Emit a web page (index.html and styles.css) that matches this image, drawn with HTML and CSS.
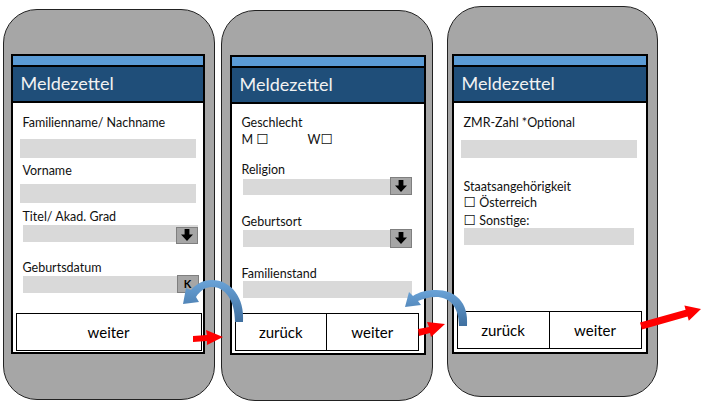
FILE: index.html
```html
<!DOCTYPE html>
<html lang="de">
<head>
<meta charset="utf-8">
<title>Meldezettel</title>
<link rel="stylesheet" href="styles.css">
</head>
<body>
<div class="stage">
  <div class="phone phone-1">
    <div class="screen">
      <div class="topbar"></div>
      <div class="title">Meldezettel</div>
      <div class="body body-1">
        <div class="label l1">Familienname/ Nachname</div>
        <div class="field f1"></div>
        <div class="label l2">Vorname</div>
        <div class="field f2"></div>
        <div class="label l3">Titel/ Akad. Grad</div>
        <div class="select s3">
          <div class="field"></div>
          <div class="drop"><svg width="12" height="12" viewBox="0 0 10 10"><polygon points="3,0 7,0 7,4.5 10,4.5 5,10 0,4.5 3,4.5" fill="#000"/></svg></div>
        </div>
        <div class="label l4">Geburtsdatum</div>
        <div class="select s4">
          <div class="field"></div>
          <div class="drop k">K</div>
        </div>
        <div class="btnrow single b1"><div class="btn">weiter</div></div>
      </div>
    </div>
  </div>

  <div class="phone phone-2">
    <div class="screen">
      <div class="topbar"></div>
      <div class="title">Meldezettel</div>
      <div class="body body-2">
        <div class="label g1">Geschlecht</div>
        <div class="label g2"><span class="opt">M <span class="box">☐</span></span><span class="opt">W<span class="box">☐</span></span></div>
        <div class="label g3">Religion</div>
        <div class="select s5">
          <div class="field"></div>
          <div class="drop"><svg width="12" height="12" viewBox="0 0 10 10"><polygon points="3,0 7,0 7,4.5 10,4.5 5,10 0,4.5 3,4.5" fill="#000"/></svg></div>
        </div>
        <div class="label g4">Geburtsort</div>
        <div class="select s6">
          <div class="field"></div>
          <div class="drop"><svg width="12" height="12" viewBox="0 0 10 10"><polygon points="3,0 7,0 7,4.5 10,4.5 5,10 0,4.5 3,4.5" fill="#000"/></svg></div>
        </div>
        <div class="label g5">Familienstand</div>
        <div class="field f7"></div>
        <div class="btnrow b2"><div class="btn">zurück</div><div class="btn">weiter</div></div>
      </div>
    </div>
  </div>

  <div class="phone phone-3">
    <div class="screen">
      <div class="topbar"></div>
      <div class="title">Meldezettel</div>
      <div class="body body-3">
        <div class="label z1">ZMR-Zahl *Optional</div>
        <div class="field f8"></div>
        <div class="label z2">Staatsangehörigkeit</div>
        <div class="label z3"><span class="box">☐</span> Österreich</div>
        <div class="label z4"><span class="box">☐</span> Sonstige:</div>
        <div class="field f9"></div>
        <div class="btnrow b3"><div class="btn">zurück</div><div class="btn">weiter</div></div>
      </div>
    </div>
  </div>

  <svg class="arrows" width="708" height="407" viewBox="0 0 708 407">
    <defs>
      <linearGradient id="blue" x1="0" y1="0" x2="0" y2="1">
        <stop offset="0" stop-color="#6aa3d8"/>
        <stop offset="1" stop-color="#3f6f9f"/>
      </linearGradient>
    </defs>
    <path fill="url(#blue)" d="M 243 322 C 245 298 231 280 212 280 C 203 280 196 284 191 290 L 186 288 L 183 304 L 199 302 L 196 297 C 200 291 205 287 212 287 C 225 287 235 300 235 322 Z"/>
    <path fill="url(#blue)" d="M 467 326 C 469 302 455 290 436 290 C 427 290 419 292 413 296 L 409 292 L 405 307 L 421 305 L 418 301 C 423 299 429 297 436 297 C 449 297 459 306 459 326 Z"/>
    <polygon fill="#ff0000" points="193,336 207,335 206,330 223,337 207,345 207,341 193,342"/>
    <polygon fill="#ff0000" points="418,329 429,327 427,322 445,324 431,337 430,333 419,336"/>
    <polygon fill="#ff0000" points="640,322.6 685.6,309.7 684.4,305.4 701,309 688.8,320.8 687.6,316.5 642,329.4"/>
  </svg>
</div>
</body>
</html>
```

FILE: styles.css
```css
* { box-sizing: border-box; }
html, body { margin: 0; padding: 0; background: #fff; }
body {
  width: 708px;
  height: 407px;
  overflow: hidden;
  font-family: Lato, "DejaVu Sans", sans-serif;
  color: #111;
}
.stage {
  position: relative;
  display: flex;
  align-items: flex-start;
  padding-left: 3px;
  width: 708px;
  height: 407px;
}
.phone {
  width: 212px;
  height: 391px;
  background: #a6a6a6;
  border: 1.5px solid #222;
  border-radius: 34px;
  display: flex;
  flex-direction: column;
}
.phone-1 { margin-top: 9px; padding: 43.5px 9.5px 0 6.5px; }
.phone-2 { margin-top: 10px; margin-left: 6px; padding: 43.5px 6.5px 0 7.5px; }
.phone-3 { margin-top: 6px; margin-left: 14px; width: 211px; padding: 46.5px 9.5px 0 3.5px; }

.screen {
  height: 300px;
  background: #fff;
  border: 2px solid #000;
  display: flex;
  flex-direction: column;
}
.topbar {
  height: 11px;
  background: #5b9bd5;
  border-bottom: 2px solid #000;
}
.title {
  height: 36px;
  background: #1f4e79;
  border-bottom: 2px solid #000;
  color: #f2f2f2;
  font-size: 18px;
  display: flex;
  align-items: center;
  padding-left: 8px;
  padding-bottom: 1px;
}
.body {
  flex: 1;
  display: flex;
  flex-direction: column;
}
.label {
  font-size: 12.5px;
  line-height: 14px;
  height: 14px;
  padding-left: 10px;
  white-space: nowrap;
}
.field {
  background: #d9d9d9;
  height: 19px;
}
.select {
  display: grid;
}
.select > * { grid-area: 1 / 1; }
.select .field { height: 17px; }
.drop {
  justify-self: end;
  width: 22px;
  height: 17px;
  background: #a6a6a6;
  border: 1px solid #7f7f7f;
  display: flex;
  align-items: center;
  justify-content: center;
}
.drop.k {
  font-weight: bold;
  font-size: 11px;
  color: #000;
  height: 18px;
}
.box {
  font-family: "DejaVu Sans", sans-serif;
  font-size: 14px;
  line-height: 14px;
}
.btnrow {
  display: flex;
  height: 38px;
  border: 1.5px solid #000;
  background: #fff;
}
.btn {
  flex: 1;
  display: flex;
  align-items: center;
  justify-content: center;
  font-size: 15px;
  color: #000;
}
.btnrow .btn + .btn { border-left: 1.5px solid #000; }

/* phone 1 */
.l1 { margin-top: 13px; }
.f1 { margin: 9px 7px 0 7px; }
.l2 { margin-top: 6px; }
.f2 { margin: 6px 7px 0 7px; }
.l3 { margin-top: 7px; }
.s3 { margin: 1px 5px 0 10px; }
.s3 .drop { margin-top: 2px; }
.l4 { margin-top: 17px; }
.s4 { margin: 0 4px 0 10px; }
.s4 .field { margin-top: 1px; }
.b1 { margin: 20px 1px 0 3px; }

/* phone 2 */
.g1 { margin-top: 12px; }
.g2 { margin-top: 2px; display: flex; }
.g2 .opt { width: 66px; }
.g3 { margin-top: 17px; }
.s5 { margin: 0 12px 0 11px; }
.s5 .field { margin-top: 2px; height: 16px; }
.s5 .drop { height: 18px; }
.g4 { margin-top: 20px; }
.s6 { margin: 0 12px 0 11px; }
.s6 .field { margin-top: 1px; }
.s6 .drop { height: 19px; }
.g5 { margin-top: 19px; }
.f7 { margin: 0 12px 0 11px; height: 17px; }
.b2 { margin: 15px 5px 0 3px; }

/* phone 3 */
.z1 { margin-top: 13px; }
.f8 { margin: 10px 9px 0 7px; height: 18px; }
.z2 { margin-top: 22px; }
.z3 { margin-top: 1px; }
.z4 { margin-top: 4px; }
.f9 { margin: 1px 12px 0 10px; height: 17px; }
.b3 { margin: 66px 4px 0 3px; }

.arrows {
  position: absolute;
  left: 0;
  top: 0;
  pointer-events: none;
}
```
